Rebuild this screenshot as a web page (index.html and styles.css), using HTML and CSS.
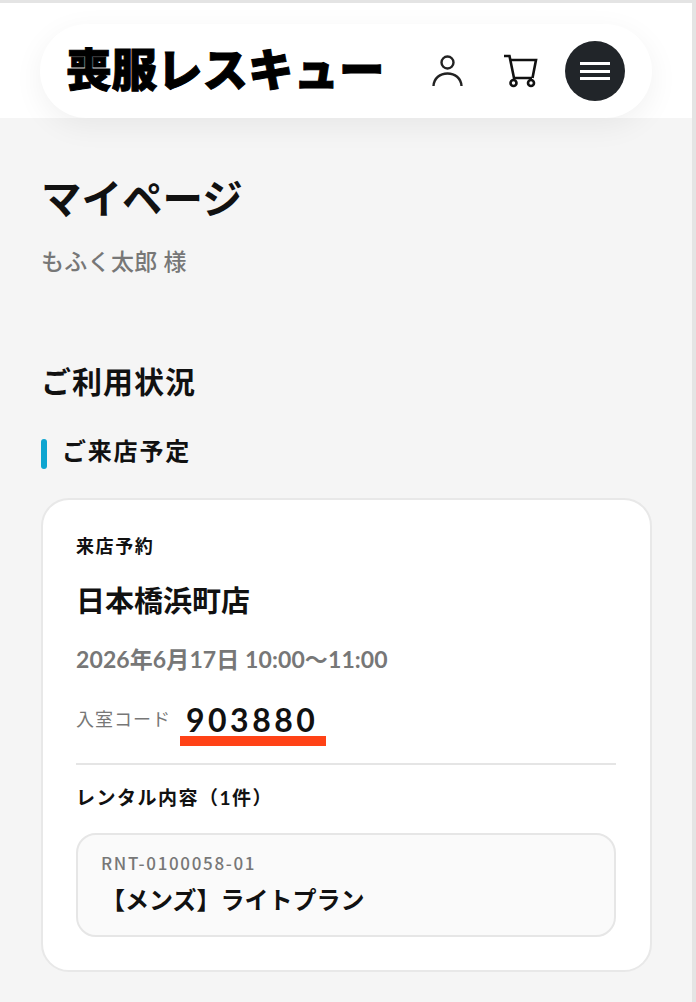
FILE: index.html
```html
<!DOCTYPE html>
<html lang="ja">

<head>
    <title>マイページ</title>
    <link rel="stylesheet" href="styles.css">
</head>

<body>
    <div class="page">
        <header class="site-header">
            <div class="header-pill">
                <a class="logo">喪服レスキュー</a>
                <div class="header-icons">
                    <svg class="icon-user" width="32" height="36" viewBox="0 0 32 36" fill="none" stroke="#222" stroke-width="2.4">
                        <circle cx="15.500" cy="9.500" r="6"></circle>
                        <path d="M1.500 33 C2 25 8 20.500 15.500 20.500 C23 20.500 29 25 29.500 33"></path>
                    </svg>
                    <svg class="icon-cart" width="34" height="34" viewBox="0 0 34 34" fill="none" stroke="#111" stroke-width="2.600">
                        <path d="M0 2 H5.500 L10 24 H28"></path>
                        <path d="M6.500 6 H32 L28.500 24"></path>
                        <circle cx="9.500" cy="29" r="3"></circle>
                        <circle cx="27" cy="29" r="3"></circle>
                    </svg>
                    <button class="menu-btn">
                        <span></span>
                        <span></span>
                        <span></span>
                    </button>
                </div>
            </div>
        </header>

        <main class="content">
            <h1>マイページ</h1>
            <p class="user-name">もふく太郎 様</p>

            <h2>ご利用状況</h2>
            <h3><span class="h3-bar"></span><span class="h3-text">ご来店予定</span></h3>

            <section class="card">
                <p class="card-label">来店予約</p>
                <p class="shop-name">日本橋浜町店</p>
                <p class="visit-date">2026年6月17日 10:00～11:00</p>
                <div class="code-row">
                    <span class="code-label">入室コード</span>
                    <span class="code-value">903880</span>
                </div>
                <hr class="divider">
                <p class="rental-title">レンタル内容（1件）</p>
                <div class="rental-item">
                    <p class="rental-id">RNT-0100058-01</p>
                    <p class="rental-name">【メンズ】ライトプラン</p>
                </div>
            </section>
        </main>
    </div>
</body>

</html>
```

FILE: styles.css
```css
* {
    box-sizing: border-box;
}

body {
    font-family: Lato, "Noto Sans CJK JP", sans-serif;
    margin: 0;
    padding: 3px 4px 0 0;
    background-color: #e4e4e4;
    color: #111;
    overflow: hidden;
}

p,
h1,
h2,
h3 {
    margin: 0;
}

.page {
    height: 999px;
    background-color: #f5f5f5;
}

.site-header {
    height: 115px;
    padding: 21px 40px 0;
    background-color: #fff;
}

.header-pill {
    display: flex;
    align-items: center;
    justify-content: space-between;
    width: 612px;
    height: 94px;
    padding: 0 27px;
    background-color: #fff;
    border-radius: 47px;
    box-shadow: 0 8px 30px rgba(0, 0, 0, 0.06);
}

.logo {
    margin: -6px 0 0 -1px;
    font-family: "Noto Sans CJK JP", sans-serif;
    font-size: 45.500px;
    font-weight: 900;
    line-height: 1;
    color: #000;
    white-space: nowrap;
    -webkit-text-stroke: 1px #000;
}

.header-icons {
    display: flex;
    align-items: center;
}

.icon-user {
    margin-right: 40px;
}

.icon-cart {
    margin-right: 27px;
}

.menu-btn {
    display: flex;
    flex-direction: column;
    justify-content: center;
    align-items: center;
    gap: 4.500px;
    width: 60px;
    height: 60px;
    padding: 0;
    border: 0;
    border-radius: 50%;
    background-color: #212529;
}

.menu-btn span {
    display: block;
    width: 30px;
    height: 3px;
    background-color: #fff;
}

.content {
    padding: 0 41px;
}

h1 {
    margin-top: 55px;
    font-size: 40.500px;
    line-height: 52px;
    font-weight: 700;
}

.user-name {
    margin-top: 19px;
    font-size: 23px;
    line-height: 34px;
    font-weight: 500;
    letter-spacing: 0.300px;
    color: #777;
}

h2 {
    margin-top: 83px;
    font-size: 30px;
    line-height: 40px;
    font-weight: 700;
    letter-spacing: 1px;
}

h3 {
    display: flex;
    align-items: center;
    gap: 15px;
    margin-top: 35px;
    font-size: 24px;
    line-height: 30px;
    font-weight: 700;
    letter-spacing: 1.800px;
}

.h3-bar {
    width: 6px;
    height: 30px;
    background-color: #0ea5d0;
    border-radius: 3px;
}

.h3-text {
    margin-bottom: 5px;
}

.card {
    width: 611px;
    margin-top: 27px;
    padding: 34px 34px 33px 33px;
    background-color: #fff;
    border: 2px solid #e8e8e8;
    border-radius: 28px;
}

.card-label {
    font-size: 18px;
    line-height: 24px;
    font-weight: 700;
    letter-spacing: 1.600px;
}

.shop-name {
    margin-top: 23px;
    font-size: 29px;
    line-height: 40px;
    font-weight: 700;
}

.visit-date {
    margin-top: 21px;
    font-size: 23px;
    line-height: 34px;
    font-weight: 700;
    letter-spacing: 0.100px;
    color: #777;
}

.code-row {
    display: flex;
    align-items: flex-start;
    margin-top: 22px;
}

.code-label {
    margin-top: 6px;
    font-size: 18px;
    line-height: 30px;
    letter-spacing: 1px;
    color: #777;
}

.code-value {
    margin-left: 9px;
    padding: 5px 8px 0 6px;
    font-size: 32px;
    line-height: 33px;
    font-weight: 700;
    letter-spacing: 3.500px;
    border-bottom: 10px solid #ff4216;
}

.divider {
    height: 2px;
    margin: 17px 0 0;
    border: 0;
    background-color: #e5e5e5;
}

.rental-title {
    margin-top: 20px;
    font-size: 19px;
    line-height: 26px;
    font-weight: 700;
    letter-spacing: 1.500px;
}

.rental-item {
    height: 104px;
    margin-top: 22px;
    padding: 17px 23px;
    background-color: #fafafa;
    border: 2px solid #e6e6e6;
    border-radius: 20px;
}

.rental-id {
    font-family: "Noto Sans CJK JP", sans-serif;
    font-size: 17px;
    line-height: 22px;
    font-weight: 500;
    letter-spacing: 1.650px;
    color: #777;
}

.rental-name {
    margin-top: 10px;
    font-size: 24px;
    line-height: 32px;
    font-weight: 700;
}
```
